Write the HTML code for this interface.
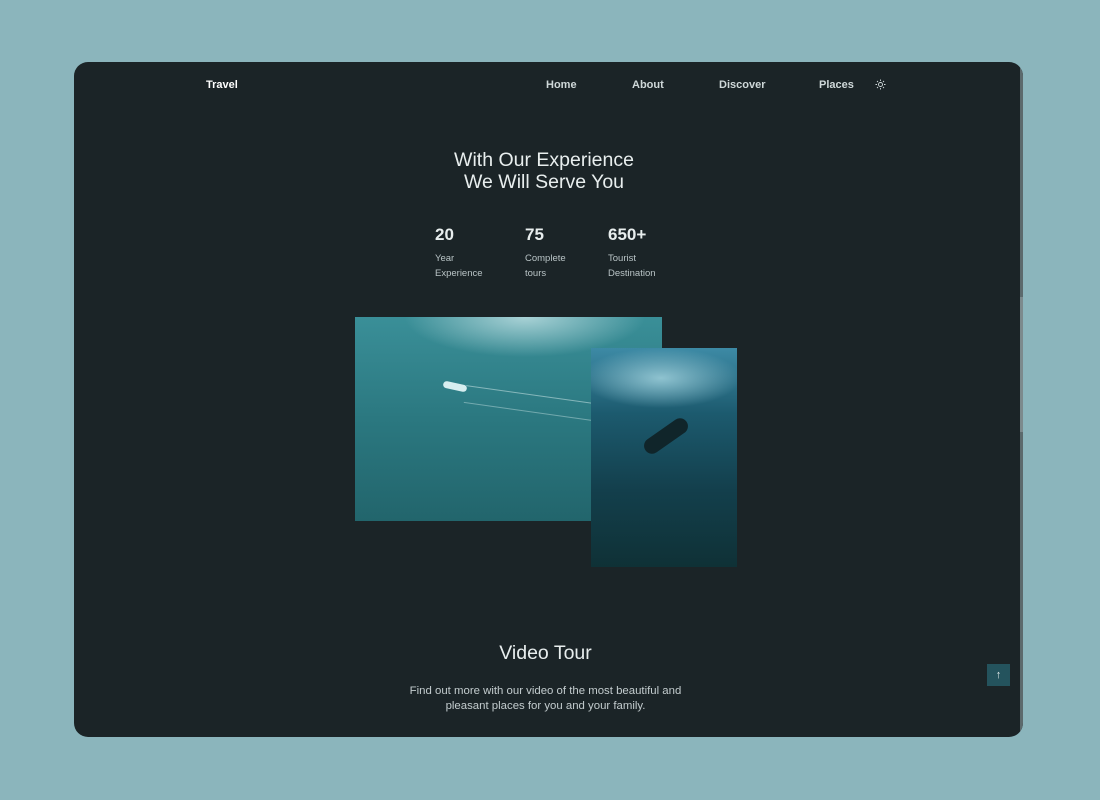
<!DOCTYPE html>
<html><head><style>
*{margin:0;padding:0;box-sizing:border-box}
body{width:1100px;height:800px;background:#8bb5bc;font-family:"Liberation Sans",sans-serif;position:relative;overflow:hidden}
.card{position:absolute;left:74px;top:62px;width:949px;height:675px;background:#1b2427;border-radius:14px;overflow:hidden}
.sb{position:absolute;right:0;top:0;width:3px;height:100%;background:#5c6a6d}
.thumb{position:absolute;right:0;top:235px;width:3px;height:135px;background:#7c8a8d}
.t{position:absolute;color:#e8eeee;white-space:nowrap}
.nav{font-size:11px;font-weight:bold;color:#cfd8d9;top:17px}
.h{font-size:19.5px;text-align:center;width:300px;left:320px;line-height:22px;top:87px}
.n{font-size:17px;font-weight:bold;top:163px}
.l{font-size:9.5px;color:#b9c4c6;line-height:15px;top:189px}
.img1{position:absolute;left:281px;top:255px;width:307px;height:204px;background:radial-gradient(ellipse 120px 40px at 170px 0,#a9d2d6,transparent),linear-gradient(180deg,#3a8f98,#2b7880 50%,#22656c)}
.img2{position:absolute;left:517px;top:286px;width:146px;height:219px;background:radial-gradient(ellipse 80px 30px at 70px 30px,#8fc3d0,transparent),linear-gradient(180deg,#3d8aa5,#1c5a6e 30%,#133f4c 65%,#0f3136)}
.up{position:absolute;left:913px;top:602px;width:23px;height:22px;background:#24535d;color:#e0eaea;font-size:11px;text-align:center;line-height:22px}
</style></head><body>
<div class="card">
<div class="t nav" style="left:132px;color:#fff">Travel</div>
<div class="t nav" style="left:472px">Home</div>
<div class="t nav" style="left:558px">About</div>
<div class="t nav" style="left:645px">Discover</div>
<div class="t nav" style="left:745px">Places</div>
<svg style="position:absolute;left:801px;top:17px" width="11" height="11" viewBox="0 0 11 11" stroke="#cfd8d9" fill="none" stroke-width="0.9"><circle cx="5.5" cy="5.5" r="2"/><path d="M5.5 0.5v1.5M5.5 9v1.5M0.5 5.5h1.5M9 5.5h1.5M2 2l1 1M8 8l1 1M2 9l1-1M8 3l1-1"/></svg>
<div class="t h">With Our Experience<br>We Will Serve You</div>
<div class="t n" style="left:361px">20</div>
<div class="t n" style="left:451px">75</div>
<div class="t n" style="left:534px">650+</div>
<div class="t l" style="left:361px">Year<br>Experience</div>
<div class="t l" style="left:451px">Complete<br>tours</div>
<div class="t l" style="left:534px">Tourist<br>Destination</div>
<div class="img1"><div style="position:absolute;left:88px;top:66px;width:24px;height:7px;background:#d8eef0;border-radius:4px;transform:rotate(12deg)"></div><div style="position:absolute;left:110px;top:68px;width:130px;height:18px;border-top:1px solid rgba(220,240,240,.5);border-bottom:1px solid rgba(220,240,240,.4);transform:rotate(8deg);transform-origin:left"></div></div>
<div class="img2"><div style="position:absolute;left:50px;top:80px;width:50px;height:16px;background:#10252a;border-radius:8px;transform:rotate(-35deg)"></div></div>
<div class="t" style="left:0;width:943px;text-align:center;top:580px;font-size:19.5px">Video Tour</div>
<div class="t" style="left:0;width:943px;text-align:center;top:622px;font-size:11.4px;line-height:15px;color:#c3ccce">Find out more with our video of the most beautiful and<br>pleasant places for you and your family.</div>
<div class="up">↑</div>
<div class="sb"></div><div class="thumb"></div>
</div>
</body></html>
